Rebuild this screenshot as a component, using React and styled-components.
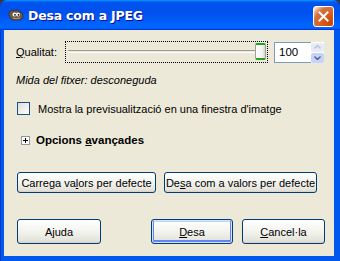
import React from 'react'
import styled, { createGlobalStyle } from 'styled-components'

const GlobalStyle = createGlobalStyle`
  html, body {
    margin: 0;
    padding: 0;
    background: #3a3a3a;
    font-family: "Liberation Sans", sans-serif;
  }
  #root {
    width: 340px;
    height: 261px;
    overflow: hidden;
  }
`

const Window = styled.div`
  width: 340px;
  height: 266px;
  display: flex;
  flex-direction: column;
  background: #0831d9;
  border-radius: 7px 7px 0 0;
  overflow: hidden;
`

const TitleBar = styled.div`
  height: 30px;
  flex: none;
  display: flex;
  align-items: center;
  padding: 0 6px 0 8px;
  background: linear-gradient(180deg, #0997ff, #0053ee 8%, #0050ee 40%, #06f 88%, #06f 93%, #005bff 95%, #003dd7 96%, #003dd7);
`

const Title = styled.span`
  flex: 1;
  margin-left: 4px;
  color: #fff;
  font-family: "DejaVu Sans", sans-serif;
  font-weight: bold;
  font-size: 12.5px;
  letter-spacing: -0.2px;
  text-shadow: 1px 1px #0f1089;
`

const CloseButton = styled.div`
  width: 19px;
  height: 19px;
  margin-top: 2px;
  border: 1px solid #fff;
  border-radius: 3px;
  display: flex;
  align-items: center;
  justify-content: center;
  background: radial-gradient(circle at 90% 90%, #cc4600 0%, #dc6527 55%, #cd7546 70%, #ffccb2 90%, #fff 100%);
`

const Frame = styled.div`
  flex: 1;
  display: flex;
  padding: 0 6px 10px 4px;
  background: linear-gradient(90deg, #0339c9 0 1px, #0058ee 1px);
`

const Client = styled.div`
  flex: 1;
  background: #ece9d8;
  display: flex;
  flex-direction: column;
  padding: 11px 0 0 12px;
  font-family: "Liberation Sans", sans-serif;
  font-size: 11px;
  color: #000;
`

const QualityRow = styled.div`
  display: flex;
  align-items: center;
  height: 22px;
`

const Label = styled.span`
  width: 49px;
`

const SliderFocus = styled.div`
  width: 201px;
  height: 20px;
  border: 1px dotted #000;
  position: relative;
  display: flex;
  align-items: center;
`

const Track = styled.div`
  margin: -2px 2px 0;
  flex: 1;
  height: 1px;
  border-top: 1px solid #9d9c99;
  border-bottom: 1px solid #fff;
`

const Thumb = styled.div`
  position: absolute;
  left: 189px;
  top: 1px;
  width: 11px;
  height: 17px;
  box-sizing: border-box;
  border-radius: 2px;
  border: 1px solid #9aa39a;
  border-top: 2px solid #21a121;
  border-bottom: 2px solid #21a121;
  background: linear-gradient(90deg, #fff, #f2f1ec 70%, #d6d3c8);
`

const SpinWrap = styled.div`
  margin-left: 6px;
  display: flex;
  height: 21px;
`

const SpinEntry = styled.div`
  width: 32px;
  height: 19px;
  border: 1px solid #7f9db9;
  border-right: none;
  background: #fff;
  padding-left: 4px;
  display: flex;
  align-items: center;
  font-size: 11.5px;
`

const SpinButtons = styled.div`
  width: 13px;
  display: flex;
  flex-direction: column;
  gap: 1px;
  background: #fff;
  border-top: 1px solid #fff;
`

const SpinButton = styled.div`
  flex: 1;
  display: flex;
  align-items: center;
  justify-content: center;
  border-radius: 2px;
  background: ${p => (p.$disabled ? '#e8ebf4' : '#c6d3f7')};
`

const Info = styled.div`
  margin-top: 11px;
  font-style: italic;
`

const CheckRow = styled.label`
  display: flex;
  align-items: center;
  margin-top: 16px;
  gap: 8px;
  margin-left: 1px;
`

const CheckBox = styled.span`
  width: 11px;
  height: 11px;
  border: 1px solid #1c5180;
  background: linear-gradient(135deg, #dcdcd7, #fff);
`

const ExpanderRow = styled.div`
  display: flex;
  align-items: center;
  margin-top: 19px;
  margin-left: 5px;
  gap: 6px;
  font-weight: bold;
  font-size: 11.5px;
`

const PlusBox = styled.span`
  width: 7px;
  height: 7px;
  border: 1px solid #919b9c;
  background: #fff;
  position: relative;
  &::before {
    content: '';
    position: absolute;
    left: 1px;
    top: 3px;
    width: 5px;
    height: 1px;
    background: #000;
  }
  &::after {
    content: '';
    position: absolute;
    left: 3px;
    top: 1px;
    width: 1px;
    height: 5px;
    background: #000;
  }
`

const ButtonRow = styled.div`
  display: flex;
  gap: ${p => p.$gap || 8}px;
  margin-top: ${p => p.$top}px;
  margin-left: 1px;
`

const Button = styled.div`
  width: ${p => p.$w}px;
  height: ${p => p.$h}px;
  box-sizing: border-box;
  border: 1px solid #003c74;
  border-radius: 3px;
  background: linear-gradient(180deg, #fff, #f0f0ea 60%, #e3e2da 90%, #d6d0c5);
  display: flex;
  align-items: center;
  justify-content: center;
  white-space: nowrap;
  box-shadow: ${p => (p.$default ? 'inset 0 0 0 1px #cee7ff, inset 0 -1px 0 2px #6982ee, inset 0 1px 0 1px #bcd4f6' : 'none')};
`

const Spacer = styled.div`
  width: ${p => p.$w}px;
`

const Wilber = () => (
  <svg width="16" height="13" viewBox="0 0 16 13">
    <path d="M1 4 Q3 0 6 2 L8 1 Q10 0 11 3 Q15 3 15 7 Q15 11 9 11 Q3 12 2 8 Q0 6 1 4Z" fill="#6e5a45" stroke="#3a2f25" strokeWidth="0.8" />
    <circle cx="6.5" cy="5.5" r="2" fill="#fff" />
    <circle cx="10" cy="5.5" r="2" fill="#fff" />
    <circle cx="7" cy="5.8" r="0.9" fill="#000" />
    <circle cx="10.5" cy="5.8" r="0.9" fill="#000" />
    <path d="M5 9 Q8 10.5 12 9" stroke="#b79a7a" strokeWidth="1" fill="none" />
  </svg>
)

const U = styled.span`
  text-decoration: underline;
`

export default function App() {
  return (
    <>
      <GlobalStyle />
      <Window>
        <TitleBar>
          <Wilber />
          <Title>Desa com a JPEG</Title>
          <CloseButton>
            <svg width="11" height="11" viewBox="0 0 11 11">
              <path d="M1.5 1.5 L9.5 9.5 M9.5 1.5 L1.5 9.5" stroke="#fff" strokeWidth="2" strokeLinecap="square" />
            </svg>
          </CloseButton>
        </TitleBar>
        <Frame>
          <Client>
            <QualityRow>
              <Label><U>Q</U>ualitat:</Label>
              <SliderFocus>
                <Track />
                <Thumb />
              </SliderFocus>
              <SpinWrap>
                <SpinEntry>100</SpinEntry>
                <SpinButtons>
                  <SpinButton $disabled>
                    <svg width="7" height="4" viewBox="0 0 7 4"><path d="M0.5 3.5 L3.5 0.5 L6.5 3.5" stroke="#b8c2d8" strokeWidth="1.4" fill="none" /></svg>
                  </SpinButton>
                  <SpinButton>
                    <svg width="7" height="4" viewBox="0 0 7 4"><path d="M0.5 0.5 L3.5 3.5 L6.5 0.5" stroke="#4d6185" strokeWidth="1.4" fill="none" /></svg>
                  </SpinButton>
                </SpinButtons>
              </SpinWrap>
            </QualityRow>
            <Info>Mida del fitxer: desconeguda</Info>
            <CheckRow>
              <CheckBox />
              <span>Mostra la previsualització en una finestra d'imatge</span>
            </CheckRow>
            <ExpanderRow>
              <PlusBox />
              <span>Opcions <U>a</U>vançades</span>
            </ExpanderRow>
            <ButtonRow $top={26}>
              <Button $w={139} $h={21}>Carrega va<U>l</U>ors per defecte</Button>
              <Button $w={153} $h={21}>De<U>s</U>a com a valors per defecte</Button>
            </ButtonRow>
            <ButtonRow $top={26} $gap={9}>
              <Button $w={84} $h={25}>Ajuda</Button>
              <Spacer $w={32} />
              <Button $w={82} $h={25} $default><U>D</U>esa</Button>
              <Button $w={83} $h={25}><U>C</U>ancel·la</Button>
            </ButtonRow>
          </Client>
        </Frame>
      </Window>
    </>
  )
}
